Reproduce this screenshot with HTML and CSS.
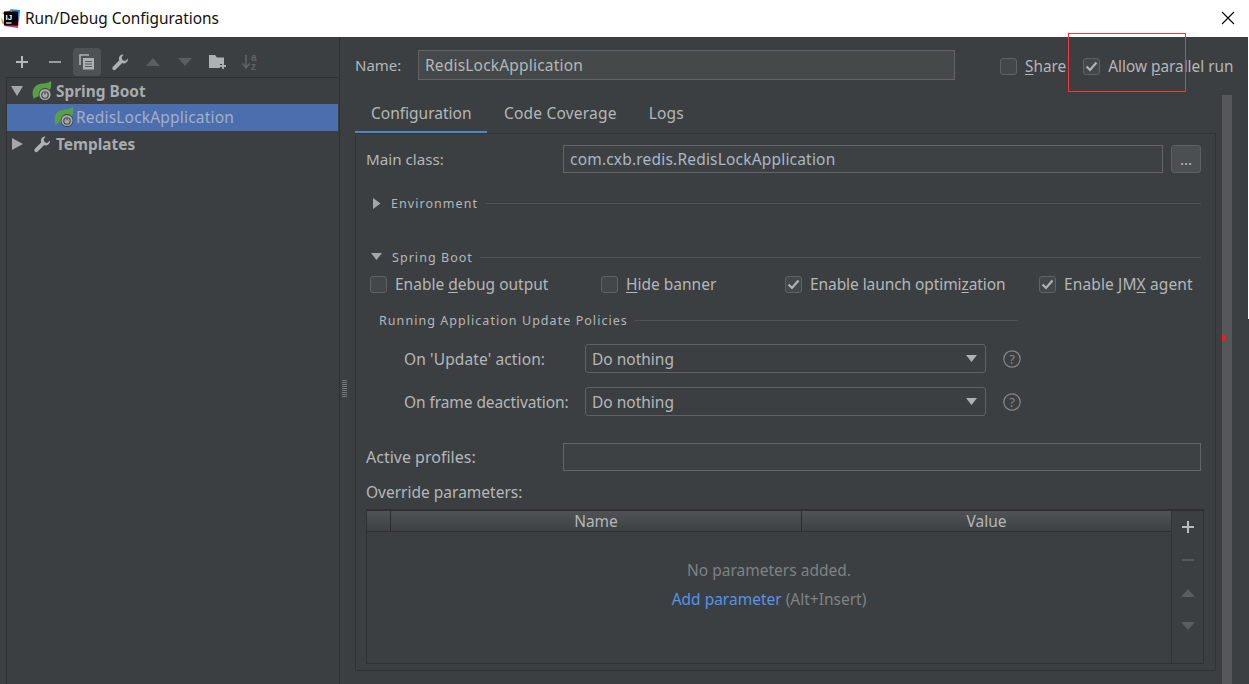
FILE: index.html
```html
<!DOCTYPE html>
<html lang="en">
<head>
<meta charset="utf-8">
<title>Run/Debug Configurations</title>
<link rel="stylesheet" href="styles.css">
</head>
<body>
<svg class="defs" width="0" height="0" aria-hidden="true">
  <defs>
    <g id="leaf">
      <path d="M1 15C-1 8 4 2.5 11 2.5C14 2.5 17 1.5 19 0C20 5 18.5 10 15 13L6 15.5C4 16 2.5 17 1.5 18Z" fill="#5a9e46"/>
      <circle cx="13" cy="13.5" r="6.4" fill="#3c3f41"/>
      <circle cx="13" cy="13.5" r="5.6" fill="#a7acaf"/>
      <circle cx="13" cy="14" r="3.2" fill="none" stroke="#3c3f41" stroke-width="1.1"/>
      <path d="M13 9.6v4" stroke="#a7acaf" stroke-width="2.4"/>
      <path d="M13 9.8v3.8" stroke="#3c3f41" stroke-width="1.1"/>
    </g>
    <path id="wrench" d="M11.6 0.6C9.3 0.2 7.1 1.9 6.9 4.2C6.9 5 7 5.7 7.3 6.3L0.9 12.8C0.1 13.6 0.1 14.8 0.9 15.6C1.7 16.4 2.9 16.4 3.7 15.6L10.2 9.1C10.8 9.4 11.6 9.5 12.3 9.4C14.7 9.1 16.3 6.9 15.9 4.6L13.3 7.1L10.6 6.2L9.6 3.5Z"/>
  </defs>
</svg>
<header class="titlebar">
  <svg class="applogo" width="19" height="19" viewBox="0 0 19 19" aria-hidden="true">
    <path d="M1 4L10 1L9 10Z" fill="#f0532f"/>
    <path d="M0 8L5 17L1 14Z" fill="#f58a1f"/>
    <path d="M9 0L19 1L18 12Z" fill="#1f8ceb"/>
    <path d="M3 17L17 19L18 9Z" fill="#e8307f"/>
    <rect x="3" y="2.5" width="14" height="14" fill="#000"/>
    <text x="4.6" y="10.5" class="logotext">IJ</text>
    <rect x="5" y="13.4" width="5.5" height="1.2" fill="#fff"/>
  </svg>
  <span class="wintitle">Run/Debug Configurations</span>
  <svg class="closeicon" width="14" height="14" viewBox="0 0 14 14" aria-hidden="true"><path d="M1 1L13 13M13 1L1 13" stroke="#000" stroke-width="1.1" fill="none"/></svg>
</header>
<main class="dialog">
  <aside class="sidebar">
    <div class="toolbar">
      <span class="tool"><svg width="14" height="14" viewBox="0 0 14 14"><path d="M7 1v12M1 7h12" stroke="#b4b8ba" stroke-width="2"/></svg></span>
      <span class="tool"><svg width="14" height="14" viewBox="0 0 14 14"><path d="M1 7h12" stroke="#9a9d9f" stroke-width="2"/></svg></span>
      <span class="tool tool-on"><svg width="16" height="16" viewBox="0 0 16 16"><path d="M1 11V1h9" fill="none" stroke="#aeb1b3" stroke-width="1.6"/><rect x="4" y="4" width="11" height="11.5" fill="#aeb1b3"/><path d="M6 7.5h7M6 10h7M6 12.5h7" stroke="#55585a" stroke-width="1"/></svg></span>
      <span class="tool"><svg width="17" height="17" viewBox="0 0 17 17" fill="#aeb1b3"><use href="#wrench"/></svg></span>
      <span class="tool"><svg width="14" height="8" viewBox="0 0 14 8"><path d="M7 0L14 8H0Z" fill="#5b5e60"/></svg></span>
      <span class="tool"><svg width="14" height="8" viewBox="0 0 14 8"><path d="M0 0H14L7 8Z" fill="#5b5e60"/></svg></span>
      <span class="tool"><svg width="18" height="16" viewBox="0 0 18 16"><path d="M0 1H6L8 3.5H15V10H11V14H0Z" fill="#aeb1b3"/><path d="M14 9v6M11 12h6" stroke="#aeb1b3" stroke-width="1.8"/></svg></span>
      <span class="tool"><svg width="18" height="18" viewBox="0 0 18 18"><path d="M5 2v12M1.5 10.5L5 15l3.5-4.5" fill="none" stroke="#5f6264" stroke-width="1.6"/><text x="10" y="7.5" class="sorttext">a</text><text x="10" y="16.5" class="sorttext">z</text></svg></span>
    </div>
    <div class="tree">
      <div class="node">
        <svg class="arrow" width="13" height="12" viewBox="0 0 13 12"><path d="M0 1H12L6 11Z" fill="#a4a7a9"/></svg>
        <svg class="nodeicon" width="20" height="20" viewBox="0 0 20 20"><use href="#leaf"/></svg>
        <b class="nodetext">Spring Boot</b>
      </div>
      <div class="node node-sel">
        <svg class="nodeicon" width="20" height="20" viewBox="0 0 20 20"><use href="#leaf"/></svg>
        <span class="seltext appname">RedisLockApplication</span>
      </div>
      <div class="node">
        <svg class="arrow" width="13" height="12" viewBox="0 0 13 12"><path d="M1 0L12 6L1 12Z" fill="#a4a7a9"/></svg>
        <svg class="nodeicon wrenchicon" width="17" height="17" viewBox="0 0 17 17" fill="#aeb1b3"><use href="#wrench"/></svg>
        <b class="nodetext">Templates</b>
      </div>
    </div>
    <div class="grip"></div>
  </aside>
  <section class="content">
    <div class="namerow">
      <label class="namelabel">Name:</label>
      <div class="field namefield appname">RedisLockApplication</div>
      <label class="check sharecheck"><span class="box"></span><span><u>S</u>hare</span></label>
      <label class="check"><span class="box"><svg width="13" height="11" viewBox="0 0 13 11"><path d="M1.5 5.5L5 9L11.5 1.5" fill="none" stroke="#b0b3b5" stroke-width="2.2"/></svg></span><span>Allow <u>p</u>arallel run</span></label>
    </div>
    <div class="bodyrow">
      <div class="tabbed">
        <nav class="tabs">
          <span class="tab tab-on">Configuration</span>
          <span class="tab tab-wide">Code Coverage</span>
          <span class="tab tab-wide">Logs</span>
        </nav>
        <div class="panel">
          <div class="formrow mainrow">
            <span class="formlabel">Main class:</span>
            <div class="field grow appname">com.cxb.redis.RedisLockApplication</div>
            <button class="dots" type="button">...</button>
          </div>
          <div class="section envrow">
            <svg class="secarrow" width="8" height="11" viewBox="0 0 8 11"><path d="M0 0L7.5 5.5L0 11Z" fill="#a4a7a9"/></svg>
            <span class="sectitle">Environment</span>
            <span class="rule"></span>
          </div>
          <div class="section bootrow">
            <svg class="secarrow bootarrow" width="11" height="8" viewBox="0 0 11 8"><path d="M0 0H11L5.5 7Z" fill="#a4a7a9"/></svg>
            <span class="sectitle">Spring Boot</span>
            <span class="rule"></span>
          </div>
          <div class="checks">
            <label class="check"><span class="box"></span><span>Enable <u>d</u>ebug output</span></label>
            <label class="check"><span class="box"></span><span><u>H</u>ide banner</span></label>
            <label class="check"><span class="box"><svg width="13" height="11" viewBox="0 0 13 11"><path d="M1.5 5.5L5 9L11.5 1.5" fill="none" stroke="#b0b3b5" stroke-width="2.2"/></svg></span><span class="tight">Enable launch optimi<u>z</u>ation</span></label>
            <label class="check"><span class="box"><svg width="13" height="11" viewBox="0 0 13 11"><path d="M1.5 5.5L5 9L11.5 1.5" fill="none" stroke="#b0b3b5" stroke-width="2.2"/></svg></span><span class="loose">Enable JM<u>X</u> agent</span></label>
          </div>
          <div class="section policyrow">
            <span class="sectitle">Running Application Update Policies</span>
            <span class="rule"></span>
          </div>
          <div class="comborow combofirst">
            <span class="combolabel loose">On 'Update' action:</span>
            <div class="combo"><span>Do nothing</span><svg width="11" height="7" viewBox="0 0 11 7"><path d="M0 0H11L5.5 7Z" fill="#aeb1b3"/></svg></div>
            <svg class="help" width="18" height="18" viewBox="0 0 18 18"><circle cx="9" cy="9" r="8.2" fill="none" stroke="#84888a" stroke-width="1.2"/><text x="9" y="13.5" class="helptext">?</text></svg>
          </div>
          <div class="comborow combosecond">
            <span class="combolabel tight">On frame deactivation:</span>
            <div class="combo"><span>Do nothing</span><svg width="11" height="7" viewBox="0 0 11 7"><path d="M0 0H11L5.5 7Z" fill="#aeb1b3"/></svg></div>
            <svg class="help" width="18" height="18" viewBox="0 0 18 18"><circle cx="9" cy="9" r="8.2" fill="none" stroke="#84888a" stroke-width="1.2"/><text x="9" y="13.5" class="helptext">?</text></svg>
          </div>
          <div class="formrow activerow">
            <span class="formlabel activelabel">Active profiles:</span>
            <div class="field grow"></div>
          </div>
          <div class="overridelabel">Override parameters:</div>
          <div class="tablewrap">
            <div class="tablemain">
              <div class="thead">
                <span class="th"></span>
                <span class="th">Name</span>
                <span class="th">Value</span>
              </div>
              <div class="empty">
                <p class="emptyline">No parameters added.</p>
                <p class="emptyline"><span class="link">Add parameter</span> (Alt+Insert)</p>
              </div>
            </div>
            <div class="sidetools">
              <svg width="14" height="14" viewBox="0 0 14 14"><path d="M7 1v12M1 7h12" stroke="#b9bcbe" stroke-width="2"/></svg>
              <svg width="14" height="14" viewBox="0 0 14 14"><path d="M1 7h12" stroke="#55585a" stroke-width="2"/></svg>
              <svg width="14" height="14" viewBox="0 0 14 14"><path d="M7 3L14 11H0Z" fill="#5b5e60"/></svg>
              <svg width="14" height="14" viewBox="0 0 14 14"><path d="M0 3H14L7 11Z" fill="#5b5e60"/></svg>
            </div>
          </div>
        </div>
      </div>
      <div class="scrollbar"><span class="marker"></span></div>
    </div>
  </section>
</main>
<div class="redbox"></div>
</body>
</html>
```
FILE: styles.css
```css
* { box-sizing: border-box; }
html, body { margin: 0; height: 684px; overflow: hidden; }
body {
  width: 1249px;
  background: linear-gradient(#fff 319px, #3c3f41 319px);
  font-family: "Noto Sans", "Open Sans", sans-serif;
  font-size: 15.5px;
  color: #b4b7b9;
  position: relative;
}
.defs { position: absolute; }
.titlebar {
  height: 37px;
  width: 1249px;
  background: #fff;
  display: flex;
  align-items: center;
  padding: 0 14px 1px 1px;
}
.applogo { margin-right: 5px; }
.logotext { font: bold 8px "Liberation Sans", sans-serif; fill: #fff; }
.wintitle { color: #111; flex: 1; font-size: 15.4px; }
.appname { letter-spacing: 0.19px; }
.tight { letter-spacing: -0.08px; }
.loose { letter-spacing: 0.12px; }
.dialog { display: flex; width: 1248px; height: 647px; background: #3c3f41; }
.sidebar { width: 340px; border-right: 1px solid #2f3031; position: relative; flex: none; }
.toolbar { height: 40px; display: flex; align-items: center; padding: 10px 0 0 6px; }
.tool { width: 32.6px; height: 28px; display: flex; align-items: center; justify-content: center; border-radius: 4px; flex: none; }
.tool-on { background: #4f5254; width: 28px; margin: 0 2.3px; }
.tree { margin: 0 1px 0 6px; height: 607px; border-top: 1px solid #303132; border-left: 1px solid #303132; }
.node { height: 26px; display: flex; align-items: center; padding-left: 4px; }
.arrow { flex: none; }
.nodeicon { margin-left: 8px; margin-right: 4px; flex: none; }
.wrenchicon { margin-left: 10px; margin-right: 5px; }
.nodetext { font-weight: 700; color: #a9acae; font-size: 15.4px; }
.node-sel { background: #4b6eaf; padding-left: 47px; height: 27px; padding-bottom: 1px; }
.node-sel .nodeicon { margin: 0 2px 0 0; }
.seltext { color: #a5b0c4; }
.grip {
  position: absolute;
  left: 342px;
  top: 343px;
  width: 5px;
  height: 17px;
  background: repeating-linear-gradient(#767a7c 0 1px, transparent 1px 2px);
  z-index: 2;
}
.content { flex: 1; min-width: 0; display: flex; flex-direction: column; }
.namerow { height: 58px; display: flex; align-items: center; padding: 0 0 2px 15px; }
.namelabel { width: 63px; font-size: 15px; flex: none; }
.namerow .check { margin-top: 2px; font-size: 15.35px; flex: none; }
.field {
  height: 28px;
  border: 1px solid #626466;
  background: #3e4143;
  display: flex;
  align-items: center;
  padding-left: 6px;
  color: #a9b7c6;
}
.namefield { width: 537px; height: 30px; background: #45494a; color: #b4b7b9; margin-right: 45px; flex: none; }
.check { display: flex; align-items: center; gap: 8px; white-space: nowrap; }
.sharecheck { margin-right: 17px; }
.box {
  width: 17px;
  height: 17px;
  border: 1px solid #606365;
  border-radius: 3px;
  background: #43474a;
  display: flex;
  align-items: center;
  justify-content: center;
  flex: none;
}
u { text-underline-offset: 2px; text-decoration-thickness: 1px; }
.bodyrow { flex: 1; min-height: 0; display: flex; padding-left: 15px; }
.tabbed { width: 861px; flex: none; }
.tabs { height: 38px; display: flex; align-items: stretch; }
.tab { padding: 0 16px 3px; display: flex; align-items: center; }
.tab-on { border-bottom: 2px solid #4a88c7; padding-bottom: 1px; width: 132px; flex: none; margin-right: 1px; }
.tab-wide { letter-spacing: 0.2px; }
.panel {
  height: 538px;
  border: 1px solid #323334;
  padding: 11px 11px 0 10px;
}
.formrow { display: flex; align-items: center; padding-right: 3px; }
.formlabel { width: 197px; flex: none; font-size: 15.2px; }
.activelabel { font-size: 16px; }
.grow { flex: 1; }
.dots {
  width: 30px;
  height: 28px;
  margin-left: 8px;
  border: 1px solid #5e6163;
  border-radius: 3px;
  background: #4b4f51;
  color: #bbb;
  font: 15px "Noto Sans", sans-serif;
  padding: 0;
}
.section { display: flex; align-items: center; height: 20px; padding-right: 3px; }
.sectitle { font-size: 12.5px; letter-spacing: 1.05px; white-space: nowrap; }
.rule { flex: 1; height: 1px; background: #515355; margin-left: 7px; }
.secarrow { margin-left: 7px; margin-right: 10px; }
.bootarrow { margin-left: 5px; margin-right: 10px; }
.envrow { margin-top: 20px; }
.bootrow { margin-top: 34px; }
.checks {
  margin-top: 8px;
  height: 18px;
  display: grid;
  grid-template-columns: 231px 184px 254px auto;
  grid-template-rows: 18px;
  padding-left: 4px;
  align-items: center;
}
.policyrow { margin-top: 18px; height: 18px; padding-left: 13px; padding-right: 186px; }
.comborow { display: flex; align-items: center; height: 29px; padding-left: 38px; margin-top: 15px; }
.combosecond { margin-top: 14px; }
.combolabel { width: 181px; flex: none; white-space: nowrap; }
.combo {
  width: 401px;
  height: 29px;
  border: 1px solid #5f6163;
  border-radius: 3px;
  display: flex;
  align-items: center;
  justify-content: space-between;
  padding: 0 8px 0 6px;
  color: #b4b7b9;
  flex: none;
}
.help { margin-left: 17px; }
.helptext { font: 13px "Noto Sans", sans-serif; fill: #84888a; text-anchor: middle; }
.activerow { margin-top: 27px; }
.overridelabel { margin-top: 11px; height: 20px; display: flex; align-items: center; }
.tablewrap {
  margin-top: 7px;
  height: 155px;
  border: 1px solid #2f3031;
  border-top-width: 2px;
  display: flex;
}
.tablemain { flex: 1; display: flex; flex-direction: column; }
.thead {
  height: 21px;
  display: grid;
  grid-template-columns: 24px 411px 1fr;
  background: linear-gradient(#505355, #3e4143);
  border-bottom: 1px solid #2f3031;
}
.th {
  display: flex;
  align-items: center;
  justify-content: center;
  border-right: 1px solid #2a2b2c;
  height: 20px;
  line-height: 20px;
}
.th:last-child { border-right: 0; }
.empty { flex: 1; padding-top: 28px; text-align: center; color: #7f8284; }
.emptyline { margin: 0 0 9px; line-height: 20px; }
.link { color: #5394ec; }
.sidetools {
  width: 32px;
  flex: none;
  border-left: 1px solid #323334;
  display: flex;
  flex-direction: column;
  align-items: center;
  padding-top: 9px;
  gap: 19px;
}
.scrollbar { width: 10px; margin-left: 6px; background: #565759; position: relative; flex: none; }
.marker { position: absolute; left: 0; top: 240px; width: 3px; height: 6px; border: 1px solid #f02020; }
.closeicon { flex: none; margin-right: 0; }
.sorttext { font: bold 10px "Liberation Sans", sans-serif; fill: #5f6264; }
.redbox {
  position: absolute;
  left: 1068px;
  top: 33px;
  width: 118px;
  height: 59px;
  border: 1px solid #ee3a3a;
}
```
